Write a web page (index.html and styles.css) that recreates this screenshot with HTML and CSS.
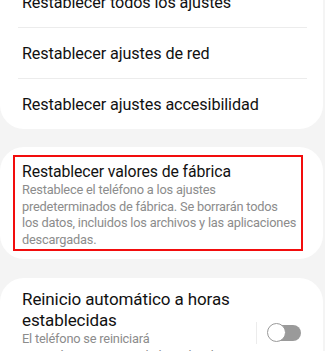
FILE: index.html
```html
<!DOCTYPE html>
<html lang="es">
<head>
<meta charset="utf-8">
<link rel="stylesheet" href="styles.css">
</head>
<body>
<div class="page">
  <section class="card list">
    <div class="row"><span class="label">Restablecer todos los ajustes</span></div>
    <div class="divider"></div>
    <div class="row"><span class="label">Restablecer ajustes de red</span></div>
    <div class="divider"></div>
    <div class="row"><span class="label">Restablecer ajustes accesibilidad</span></div>
  </section>

  <section class="card factory">
    <div class="highlight">
      <div class="title factory-title">Restablecer valores de fábrica</div>
      <div class="desc factory-desc">Restablece el teléfono a los ajustes<br>predeterminados de fábrica. Se borrarán todos<br>los datos, incluidos los archivos y las aplicaciones<br>descargadas.</div>
    </div>
  </section>

  <section class="card auto">
    <div class="auto-text">
      <div class="title">Reinicio automático a horas establecidas</div>
      <div class="desc">El teléfono se reiniciará automáticamente en el plazo de 1 hora a la hora establecida.</div>
    </div>
    <div class="auto-side">
      <div class="vsep"></div>
      <div class="switch"><div class="thumb"></div></div>
    </div>
  </section>
</div>
</body>
</html>
```

FILE: styles.css
```css
html, body {
  margin: 0;
  padding: 0;
}
body {
  width: 325px;
  height: 351px;
  overflow: hidden;
  background: #f4f4f4;
  font-family: Roboto, "Noto Sans", "Liberation Sans", sans-serif;
  color: #111;
}
.page {
  display: flex;
  flex-direction: column;
  margin-top: -23px;
}
.card {
  width: 323px;
  background: #fff;
  border-radius: 24px;
  box-sizing: border-box;
}
.list {
  display: flex;
  flex-direction: column;
}
.row {
  height: 50px;
  display: flex;
  align-items: center;
  padding-left: 22px;
}
.label {
  font-size: 16.2px;
  letter-spacing: -0.1px;
}
.divider {
  height: 1px;
  background: #ececec;
  margin: 0 16px 0 18px;
}
.factory {
  margin-top: 18px;
  height: 112px;
  padding: 8px 0 0 13px;
}
.highlight {
  width: 290px;
  height: 96px;
  box-sizing: border-box;
  border: 2px solid #f20d0d;
  padding: 5px 0 0 7px;
}
.title {
  font-size: 16.4px;
  line-height: 20px;
  letter-spacing: -0.1px;
}
.factory-title {
  font-size: 15.8px;
  line-height: 19px;
}
.desc {
  font-size: 12.8px;
  line-height: 16.7px;
  letter-spacing: -0.2px;
  color: #8c8c8c;
  margin-top: 1px;
}
.factory-desc {
  white-space: nowrap;
}
.auto {
  margin-top: 19px;
  height: 120px;
  display: flex;
  padding: 11px 0 0 22px;
}
.auto-text {
  width: 222px;
}
.auto .title {
  font-size: 17px;
  line-height: 20.5px;
}
.auto .desc {
  margin-top: 0;
  line-height: 17px;
}
.auto-side {
  display: flex;
  align-items: center;
  height: 24px;
  margin-top: 32px;
}
.vsep {
  width: 1px;
  height: 22px;
  background: #ececec;
  margin-left: 12px;
}
.switch {
  position: relative;
  width: 29px;
  height: 16px;
  border-radius: 8px;
  background: #9a9a9a;
  margin-left: 15px;
}
.thumb {
  position: absolute;
  left: -5px;
  top: -2px;
  width: 17px;
  height: 17px;
  border: 1.5px solid #9a9a9a;
  border-radius: 50%;
  background: #fff;
}
```
